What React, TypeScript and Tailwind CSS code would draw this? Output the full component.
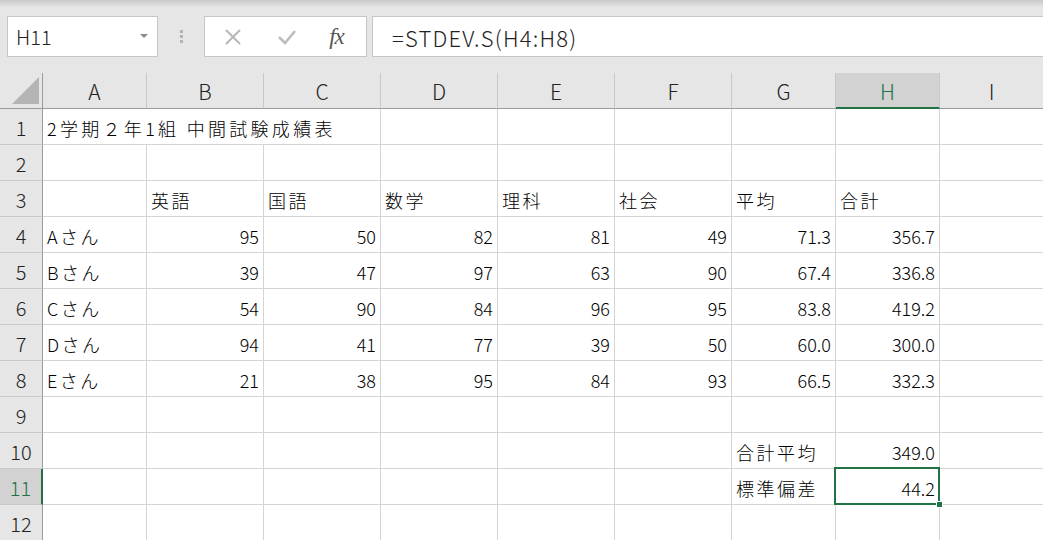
import React from "react";

const font = "font-['Noto_Sans_CJK_JP','Noto_Sans',sans-serif]";

const colW = [
  "w-[104px]",
  "w-[117px]",
  "w-[117px]",
  "w-[117px]",
  "w-[117px]",
  "w-[117px]",
  "w-[104px]",
  "w-[104px]",
  "w-[104px]",
];
const letters = ["A", "B", "C", "D", "E", "F", "G", "H", "I"];

// sheet contents, row number -> cells A..I
const sheet: Record<number, string[]> = {
  1: ["2学期２年1組 中間試験成績表"],
  3: ["", "英語", "国語", "数学", "理科", "社会", "平均", "合計"],
  4: ["Aさん", "95", "50", "82", "81", "49", "71.3", "356.7"],
  5: ["Bさん", "39", "47", "97", "63", "90", "67.4", "336.8"],
  6: ["Cさん", "54", "90", "84", "96", "95", "83.8", "419.2"],
  7: ["Dさん", "94", "41", "77", "39", "50", "60.0", "300.0"],
  8: ["Eさん", "21", "38", "95", "84", "93", "66.5", "332.3"],
  10: ["", "", "", "", "", "", "合計平均", "349.0"],
  11: ["", "", "", "", "", "", "標準偏差", "44.2"],
};

const isNum = (s: string) => /^[\d.]+$/.test(s);

function Toolbar() {
  return (
    <div className="bg-[#e6e6e6] h-[73px]">
      <div className="h-[7px] bg-linear-to-b from-[#c9c9c9] to-[#e4e4e4]" />
      <div className="flex items-stretch pl-[7px] mt-[9px] h-[41px]">
        <div className="w-[151px] bg-white border border-[#c6c6c6] flex items-center justify-between pl-[8px] pr-[9px]">
          <span className="text-[20px] font-light text-[#222] leading-none">H11</span>
          <span className="w-0 h-0 border-l-[4px] border-r-[4px] border-t-[4px] border-l-transparent border-r-transparent border-t-[#8c8c8c] mb-[2px]" />
        </div>
        <div className="w-[46px] flex flex-col items-center justify-center gap-[2px]">
          <span className="w-[3px] h-[3px] bg-[#b2b2b2]" />
          <span className="w-[3px] h-[3px] bg-[#b2b2b2]" />
          <span className="w-[3px] h-[3px] bg-[#b2b2b2]" />
        </div>
        <div className="w-[163px] bg-white border border-[#c6c6c6] flex items-center">
          <div className="w-[56px] flex justify-center">
            <svg width="18" height="18" viewBox="0 0 18 18">
              <path d="M2 2 L16 16 M16 2 L2 16" stroke="#b7b7b7" strokeWidth="2" fill="none" />
            </svg>
          </div>
          <div className="w-[52px] flex justify-center">
            <svg width="20" height="18" viewBox="0 0 20 18">
              <path d="M2 9 L8 15 L18 3" stroke="#bdbdbd" strokeWidth="2.6" fill="none" />
            </svg>
          </div>
          <div className="flex-1 flex justify-center pr-[6px]">
            <span className="font-['Liberation_Serif',serif] italic text-[23px] text-[#555] leading-none tracking-[-1px]">
              fx
            </span>
          </div>
        </div>
        <div className="flex-1 ml-[5px] bg-white border border-[#c6c6c6] border-r-0 flex items-center pl-[19px]">
          <span className="text-[22px] font-light text-[#222] leading-none tracking-[1.2px]">
            =STDEV.S(H4:H8)
          </span>
        </div>
      </div>
    </div>
  );
}

function HeaderRow() {
  return (
    <div className="flex h-[36px] bg-[#e6e6e6]">
      <div className="w-[43px] shrink-0 border-r border-b border-[#9b9b9b] relative">
        <svg className="absolute left-[12px] top-[4px]" width="27" height="27" viewBox="0 0 27 27">
          <path d="M27 0 L27 27 L0 27 Z" fill="#b4b4b4" />
        </svg>
      </div>
      {letters.map((l, i) => {
        const sel = l === "H";
        return (
          <div
            key={l}
            className={`${colW[i]} shrink-0 flex items-center justify-center text-[21px] font-light leading-none border-r border-r-[#c8c8c8] ${
              sel
                ? "bg-[#d2d2d2] text-[#217346] border-b-[2px] border-b-[#217346]"
                : "text-[#222] border-b border-b-[#9b9b9b]"
            }`}
          >
            <span className="pt-[2px]">{l}</span>
          </div>
        );
      })}
    </div>
  );
}

function SheetRow({ n }: { n: number }) {
  const cells = sheet[n] ?? [];
  const selRow = n === 11;
  return (
    <div className="flex h-[36px]">
      <div
        className={`w-[43px] shrink-0 flex items-center justify-center text-[20px] font-light leading-none border-b border-b-[#c8c8c8] ${
          selRow
            ? "bg-[#d2d2d2] text-[#217346] border-r-[2px] border-r-[#217346]"
            : "bg-[#e6e6e6] text-[#222] border-r border-r-[#9b9b9b]"
        }`}
      >
        <span className="pt-[2px]">{n}</span>
      </div>
      {letters.map((l, i) => {
        const v = cells[i] ?? "";
        const overflowTitle = n === 1 && i < 2;
        const selected = n === 11 && l === "H";
        return (
          <div
            key={l}
            className={`${colW[i]} shrink-0 relative flex items-center bg-white border-b border-[#d4d4d4] ${
              overflowTitle ? "" : "border-r"
            } ${isNum(v) ? "justify-end pr-[4px]" : "justify-start pl-[4px]"}`}
          >
            {v && (
              <span
                className={`text-[18px] font-light leading-none text-black whitespace-nowrap pt-[3px] ${
                  isNum(v) ? "" : n === 1 ? "tracking-[3.3px]" : "tracking-[2.5px]"
                } ${overflowTitle ? "relative z-10" : ""}`}
              >
                {v}
              </span>
            )}
            {selected && (
              <>
                <div className="absolute -left-[2px] -top-[2px] -right-[1px] -bottom-[1px] border-2 border-[#217346] z-20" />
                <div className="absolute -right-[4px] -bottom-[4px] w-[7px] h-[7px] bg-[#217346] border border-white z-30" />
              </>
            )}
          </div>
        );
      })}
    </div>
  );
}

export default function App() {
  return (
    <div className={`w-[1043px] h-[540px] overflow-hidden bg-white ${font}`}>
      <Toolbar />
      <HeaderRow />
      {Array.from({ length: 12 }, (_, i) => (
        <SheetRow key={i} n={i + 1} />
      ))}
    </div>
  );
}
